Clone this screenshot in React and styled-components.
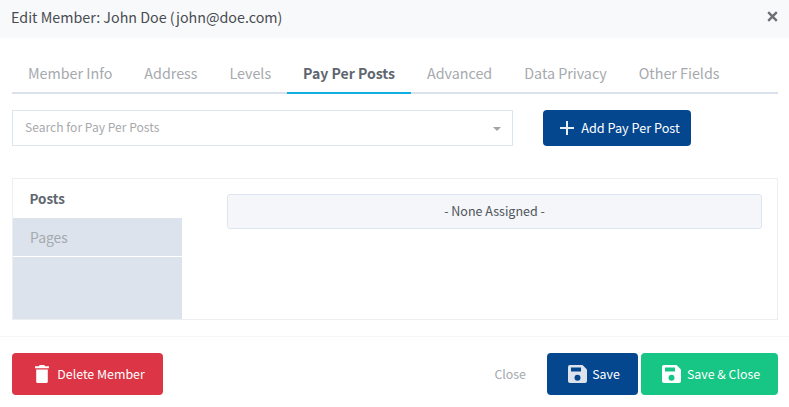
import React from "react";
import styled, { createGlobalStyle } from "styled-components";

const Global = createGlobalStyle`
  html, body { margin: 0; padding: 0; background: #fff; }
  body { font-family: "Noto Sans CJK SC", "Noto Sans", sans-serif; }
  * { box-sizing: border-box; }
`;
const Modal = styled.div`
  width: 789px; height: 407px; display: flex; flex-direction: column; overflow: hidden; background: #fff;
`;
const Header = styled.header`
  height: 38px; flex: none; background: #f8f9fb; display: flex; align-items: center;
  justify-content: space-between; padding: 0 11px 5px 11px;
`;
const Title = styled.h1`
  margin: 0; font-size: 14.3px; font-weight: 400; line-height: 20px; color: #484c51;
`;
const CloseX = styled.svg`width: 11px; height: 11px; display: block;`;
const Body = styled.main`
  flex: 1; padding: 16px 11px 0 12px; display: flex; flex-direction: column;
`;
const Tabs = styled.nav`
  display: flex; height: 40px; border-bottom: 2px solid #dae1ea; flex: none;
`;
const Tab = styled.div`
  height: 40px; padding: 0 16px; font-size: ${p => (p.$active ? 14.05 : 14.3)}px; line-height: 38px; white-space: nowrap;
  font-weight: ${p => (p.$active ? 700 : 400)};
  color: ${p => (p.$active ? "#5e666f" : "#a6a9ae")};
  border-bottom: 2px solid ${p => (p.$active ? "#0fb0e0" : "transparent")};
`;
const SearchRow = styled.div`
  display: flex; gap: 30px; margin-top: 16px; flex: none;
`;
const Search = styled.div`
  width: 501px; height: 36px; border: 1px solid #dce4ef; display: flex; align-items: center;
  justify-content: space-between; padding: 0 11px 2px 12px; background: #fff;
`;
const Placeholder = styled.span`font-size: 12.1px; line-height: 18px; color: #a7a9ad;`;
const Caret = styled.span`
  width: 0; height: 0; margin-top: 4px; border-left: 4px solid transparent; border-right: 4px solid transparent;
  border-top: 4px solid #a0a5ab;
`;
const Button = styled.button`
  height: ${p => p.$h || 42}px; width: ${p => p.$w}px; border: 0; border-radius: 4px; background: ${p => p.$bg};
  color: #fff; display: flex; align-items: center; justify-content: center; gap: ${p => p.$gap}px;
  font: 400 ${p => p.$size || 12.4}px/20px "Noto Sans CJK SC", "Noto Sans", sans-serif;
  padding: 0 0 0 ${p => p.$shift}px; flex: none;
  svg { display: block; flex: none; }
`;
const Panel = styled.section`
  margin-top: 32px; height: 142px; border: 1px solid #eceef1; display: flex; flex: none;
`;
const Side = styled.div`
  width: 169px; background: #dce3ed; display: flex; flex-direction: column; flex: none;
`;
const SideItem = styled.div`
  height: 39px; flex: none; padding-left: ${p => (p.$active ? 16.5 : 17)}px;
  font-size: ${p => (p.$active ? 13.4 : 13.9)}px; line-height: 38px;
  font-weight: ${p => (p.$active ? 700 : 400)};
  color: ${p => (p.$active ? "#5e666f" : "#a6a9ae")};
  background: ${p => (p.$active ? "#fff" : "transparent")};
  border-bottom: ${p => (p.$line ? "1px solid #fff" : "0")};
`;
const Content = styled.div`
  flex: 1; padding: 15px 15px 0 45px;
`;
const Empty = styled.div`
  height: 35px; border: 1px solid #dde5f0; border-radius: 3px; background: #f4f6f9; text-align: center;
  font-size: 12.5px; line-height: 32px; color: #4f555b;
`;
const Footer = styled.footer`
  height: 71px; flex: none; border-top: 1px solid #f5f6f8; padding: 16px 11px 0 12px;
  display: flex; align-items: flex-start;
`;
const Spacer = styled.div`flex: 1;`;
const CloseLink = styled.span`
  font-size: 12.4px; line-height: 42px; color: #a6a9ae; margin-right: 21px;
`;
const Gap = styled.div`width: 3px; flex: none;`;

const Floppy = ({ fg, hole }) => (
  <svg width="19" height="18" viewBox="0 0 19 18">
    <path d="M2 0h12.5L19 4.5V16a2 2 0 0 1-2 2H2a2 2 0 0 1-2-2V2a2 2 0 0 1 2-2z" fill={fg} />
    <rect x="3" y="2.5" width="10" height="4" fill={hole} />
    <circle cx="9.5" cy="12.7" r="3" fill={hole} />
  </svg>
);

export default function App() {
  return (
    <Modal>
      <Global />
      <Header>
        <Title>Edit Member: John Doe (john@doe.com)</Title>
        <CloseX viewBox="0 0 11 11">
          <path d="M1.2 1.2l8.6 8.6M9.8 1.2l-8.6 8.6" stroke="#6c7075" strokeWidth="2.4" fill="none" />
        </CloseX>
      </Header>
      <Body>
        <Tabs>
          <Tab>Member Info</Tab>
          <Tab>Address</Tab>
          <Tab>Levels</Tab>
          <Tab $active>Pay Per Posts</Tab>
          <Tab>Advanced</Tab>
          <Tab>Data Privacy</Tab>
          <Tab>Other Fields</Tab>
        </Tabs>
        <SearchRow>
          <Search>
            <Placeholder>Search for Pay Per Posts</Placeholder>
            <Caret />
          </Search>
          <Button $w={148} $h={36} $bg="#05478f" $gap={6} $shift={5} $size={12.7}>
            <svg width="16" height="16" viewBox="0 0 16 16">
              <path d="M8 1v14M1 8h14" stroke="#e8eef6" strokeWidth="2" fill="none" />
            </svg>
            Add Pay Per Post
          </Button>
        </SearchRow>
        <Panel>
          <Side>
            <SideItem $active>Posts</SideItem>
            <SideItem $line>Pages</SideItem>
          </Side>
          <Content>
            <Empty>- None Assigned -</Empty>
          </Content>
        </Panel>
      </Body>
      <Footer>
        <Button $w={151} $bg="#dc3545" $gap={8} $shift={5}>
          <svg width="14" height="18" viewBox="0 0 14 18">
            <path d="M4.6 0h4.8l.6 1.3H14v1.9H0V1.3h4z" fill="#fff" />
            <path d="M1.2 4.4h11.6v12a1.6 1.6 0 0 1-1.6 1.6H2.8a1.6 1.6 0 0 1-1.6-1.6z" fill="#fff" />
          </svg>
          Delete Member
        </Button>
        <Spacer />
        <CloseLink>Close</CloseLink>
        <Button $w={91} $bg="#05478f" $gap={5} $shift={3}>
          <Floppy fg="#dce3ed" hole="#05478f" />
          Save
        </Button>
        <Gap />
        <Button $w={137} $bg="#17c585" $gap={6} $shift={3}>
          <Floppy fg="#fff" hole="#17c585" />
          Save &amp; Close
        </Button>
      </Footer>
    </Modal>
  );
}
